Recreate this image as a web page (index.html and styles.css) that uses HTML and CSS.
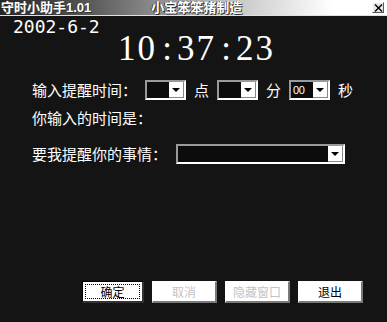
FILE: index.html
```html
<!DOCTYPE html>
<html lang="zh">
<head>
<meta charset="utf-8">
<title>守时小助手1.01</title>
<link rel="stylesheet" href="styles.css">
</head>
<body>
<div class="window">
  <div class="titlebar">
    <span class="title">守时小助手1.01</span>
    <span class="author">小宝笨笨猪制造</span>
    <span class="close"><svg width="9" height="8" viewBox="0 0 9 8"><path d="M1 0.5 L8 7.5 M8 0.5 L1 7.5" stroke="#000" stroke-width="1.4"/></svg></span>
  </div>
  <div class="date">2002-6-2</div>
  <div class="time">10<span class="sep">:</span>37<span class="sep">:</span>23</div>
  <div class="form">
    <div class="row row-time">
      <span class="label">输入提醒时间：</span>
      <div class="combo combo-small"><span class="field"></span><span class="drop"></span></div>
      <span class="unit">点</span>
      <div class="combo combo-small"><span class="field"></span><span class="drop"></span></div>
      <span class="unit">分</span>
      <div class="combo combo-small"><span class="field"><span class="value">00</span></span><span class="drop"></span></div>
      <span class="unit">秒</span>
    </div>
    <div class="row row-echo">
      <span class="label">你输入的时间是：</span>
    </div>
    <div class="row row-task">
      <span class="label">要我提醒你的事情：</span>
      <div class="combo combo-wide"><span class="field"></span><span class="drop"></span></div>
    </div>
  </div>
  <div class="buttons">
    <button class="btn btn-ok"><span class="focus">确定</span></button>
    <button class="btn btn-disabled">取消</button>
    <button class="btn btn-disabled">隐藏窗口</button>
    <button class="btn btn-exit">退出</button>
  </div>
</div>
</body>
</html>
```
FILE: styles.css
```css
* { box-sizing: border-box; }
html, body { margin: 0; padding: 0; background: #141414; }
.window {
  width: 387px;
  height: 322px;
  background: #141414;
  display: flex;
  flex-direction: column;
  overflow: hidden;
  color: #fff;
  font-family: "Noto Sans CJK SC", sans-serif;
}
.titlebar {
  flex: none;
  height: 15px;
  display: flex;
  align-items: center;
  background: linear-gradient(to right, #262626 0%, #505050 20%, #8c8c8c 40%, #d0d0d0 65%, #fff 86%, #fff 100%);
  box-shadow: 0 1px 0 #e0e0e0;
  margin-bottom: 1px;
  font-family: "Liberation Sans", "Noto Sans CJK SC", sans-serif;
  font-size: 13px;
  font-weight: bold;
  line-height: 15px;
  color: #fff;
  text-shadow: 1px 1px 0 #333, -1px 0 0 #444;
}
.title, .author {
  white-space: nowrap;
}
.title { margin-left: 1px; }
.author { margin-left: 60px; }
.close {
  margin-left: auto;
  margin-right: 3px;
  width: 12px;
  height: 11px;
  background: #e8e8e8;
  border-top: 1px solid #fff;
  border-left: 1px solid #fff;
  border-right: 1px solid #555;
  border-bottom: 1px solid #555;
  display: flex;
  align-items: center;
  justify-content: center;
}
.date {
  margin-top: 2px;
  padding-left: 13px;
  font-family: "DejaVu Sans Mono", monospace;
  font-size: 18px;
  line-height: 18px;
  height: 18px;
}
.time {
  padding-left: 118px;
  font-family: "Liberation Serif", serif;
  font-size: 35px;
  line-height: 26px;
  height: 26px;
  letter-spacing: 2px;
}
.sep {
  display: inline-block;
  width: 20px;
  text-align: center;
  letter-spacing: 0;
}
.form {
  padding-left: 32px;
  display: flex;
  flex-direction: column;
  font-size: 15px;
}
.row {
  display: flex;
  align-items: center;
  height: 20px;
  line-height: 20px;
}
.row-time { margin-top: 18px; gap: 8px; }
.row-echo { margin-top: 8px; }
.row-task { margin-top: 16px; gap: 9px; }
.combo {
  height: 20px;
  display: flex;
  border-top: 2px solid #9a9a9a;
  border-left: 2px solid #9a9a9a;
  border-right: 2px solid #fff;
  border-bottom: 2px solid #fff;
  background: #0c0c0c;
}
.combo-small { width: 41px; }
.combo-wide { width: 169px; }
.field {
  flex: 1;
  display: flex;
  align-items: center;
  padding-left: 2px;
}
.value {
  font-family: "Liberation Sans", sans-serif;
  font-size: 11px;
  line-height: 12px;
  color: #fff;
  letter-spacing: -0.5px;
}
.drop {
  width: 15px;
  height: 16px;
  background: #fff;
  border-right: 1px solid #888;
  border-bottom: 1px solid #888;
  display: flex;
  align-items: center;
  justify-content: center;
}
.drop::before {
  content: "";
  width: 0;
  height: 0;
  border-left: 4px solid transparent;
  border-right: 4px solid transparent;
  border-top: 4px solid #000;
}
.buttons {
  margin-top: auto;
  padding-left: 82px;
  padding-bottom: 19px;
  display: flex;
  gap: 8px;
}
.btn {
  height: 22px;
  width: 65px;
  padding: 0;
  background: #fff;
  border-top: 1px solid #fff;
  border-left: 1px solid #fff;
  border-right: 2px solid #7a7a7a;
  border-bottom: 2px solid #7a7a7a;
  font-family: "Noto Sans CJK SC", sans-serif;
  font-size: 12px;
  line-height: 18px;
  color: #000;
  display: flex;
  align-items: center;
  justify-content: center;
}
.btn-ok {
  width: 62px;
  border: 1px solid #000;
  border-right: 2px solid #333;
  border-bottom: 2px solid #333;
  padding: 2px;
}
.focus {
  flex: 1;
  align-self: stretch;
  display: flex;
  align-items: center;
  justify-content: center;
  border: 1px dotted #000;
}
.btn-disabled { color: #c4c4c4; }
```
